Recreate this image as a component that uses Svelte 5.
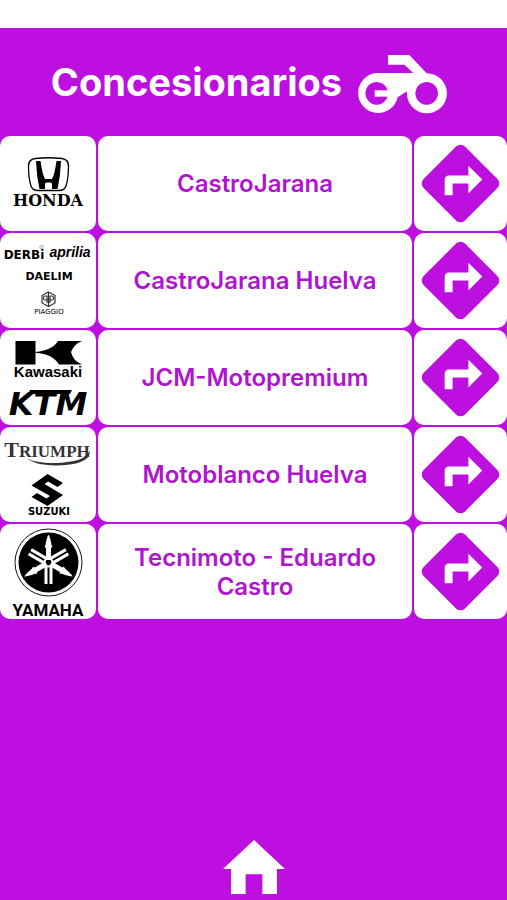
<script>
    let concesionarios = [
        {name: 'CastroJarana', logo: 'honda', brands: 'Honda'},
        {name: 'CastroJarana Huelva', logo: 'piaggio', brands: 'Derbi, Aprilia, Daelim, Piaggio'},
        {name: 'JCM-Motopremium', logo: 'kawasaki', brands: 'Kawasaki, KTM'},
        {name: 'Motoblanco Huelva', logo: 'triumph', brands: 'Triumph, Suzuki'},
        {name: 'Tecnimoto - Eduardo Castro', logo: 'yamaha', brands: 'Yamaha'}
    ];
</script>

<div class="page">
    <div class="status-bar"></div>

    <header>
        <h1>Concesionarios</h1>
        <svg class="bike" viewBox="50 40 276 183" aria-hidden="true">
            <path fill="#fff" fill-rule="evenodd" d="M146 43H210L262 98A60 60 0 1 1 203 152L175 170A60 60 0 1 1 112 97H222L195 72H146ZM112 124a34 34 0 1 0 .1 0ZM262 124a34 34 0 1 0 .1 0Z"/>
            <path fill="#fff" d="M106 149H156V168H106Z"/>
        </svg>
    </header>

    <main>
        {#each concesionarios as c}
            <div class="row">
                <div class="cell">
                    <svg class="logo" viewBox="0 0 96 95" role="img" aria-label={c.brands}>
                        {#if c.logo === 'honda'}
                            <path fill="none" stroke="#000" stroke-width="1.3" d="M35 22.500Q48 21 62 22.500Q68.500 23.500 68.500 30Q68.500 42 66 50Q64.500 54.500 59 54.500H38Q32.500 54.500 31 50Q28.500 42 28.500 30Q28.500 23.500 35 22.500Z"/>
                            <path d="M36 25H40.500Q42.500 39 45 43H52Q54.500 39 56.500 25H61Q60.500 40 57.500 53H52V48Q52 46.500 50 46.500H47Q45 46.500 45 48V53H39.500Q36.500 40 36 25Z"/>
                            <text class="serif" x="48" y="70" font-size="16">HONDA</text>
                        {:else if c.logo === 'piaggio'}
                            <text class="wide" x="24" y="26" font-size="12">DERBi</text>
                            <circle cx="41.500" cy="14" r="1.700" fill="none" stroke="#777" stroke-width=".6"/>
                            <text class="sans slant" x="70" y="24" font-size="14">aprilia</text>
                            <text class="wide" x="49" y="47" font-size="11">DAELIM</text>
                            <path fill="none" stroke="#333" stroke-width="1.200" d="M48.500 59L55 62.500V70L48.500 73.500L42 70V62.500ZM48.500 59V73.500M47 70V63H45Q43.500 63 43.500 65Q43.500 67 45 67H52Q53.500 67 53.500 65Q53.500 63 52 63H50V70"/>
                            <text class="wide light" x="49" y="81" font-size="7">PIAGGIO</text>
                        {:else if c.logo === 'kawasaki'}
                            <path d="M15.500 11H35.500V22Q53 20 58 11H82Q74 14 71 22Q73 31 82 34.500H59Q53 24 35.500 22.700V34.500H15.500Z"/>
                            <text class="sans" x="48" y="47" font-size="15">Kawasaki</text>
                            <path d="M30 60H72L70 64H28Z"/>
                            <text class="wide slant" x="48" y="85" font-size="32">KTM</text>
                        {:else if c.logo === 'triumph'}
                            <text class="roman" x="47" y="30" font-size="17"><tspan font-size="22">T</tspan>RIUMPH</text>
                            <path fill="#333" d="M27 31Q34 36 55 36Q83 35 87 27L90 24L89 29Q83 38 56 38.500Q34 38 27 31Z"/>
                            <path d="M47.500 47L63 56L57.500 60L48 54.500L44.500 57L63 68L47.500 79L31.500 70L37 66L46.500 71.500L50 69L31.500 58.500Z"/>
                            <text class="wide" x="49" y="88" font-size="10">SUZUKI</text>
                        {:else}
                            <circle cx="48.500" cy="38.500" r="33.500" fill="none" stroke="#111"/>
                            <circle cx="48.500" cy="38.500" r="30"/>
                            {#each [0, 120, 240] as angle}
                                <g transform="rotate({angle} 48.500 38.500)">
                                    <path fill="#fff" d="M48.500 10.500Q50.500 14 51.500 21L52.500 23L51 24V36H46V24L44.500 23L45.500 21Q46.500 14 48.500 10.500Z"/>
                                    <path fill="none" stroke="#fff" stroke-width="3" d="M46 42V60M51 42V60"/>
                                </g>
                            {/each}
                            <circle cx="48.500" cy="38.500" r="4" fill="none" stroke="#fff" stroke-width="2"/>
                            <text class="grotesk" x="48" y="92" font-size="17">YAMAHA</text>
                        {/if}
                    </svg>
                </div>
                <button class="cell name">{c.name}</button>
                <button class="cell" aria-label="Cómo llegar a {c.name}">
                    <svg class="directions" viewBox="1 1 22 22" aria-hidden="true">
                        <rect x="4.600" y="4.600" width="14.800" height="14.800" rx="1.600" transform="rotate(45 12 12)"/>
                        <path fill="#fff" d="M14 14.500V12h-4v3H8v-4c0-.55.45-1 1-1h5V7.500l3.500 3.500-3.500 3.500z"/>
                    </svg>
                </button>
            </div>
        {/each}
    </main>

    <footer>
        <a href="#inicio" aria-label="Inicio">
            <svg class="home" viewBox="2 3 20 17" preserveAspectRatio="none" aria-hidden="true">
                <path fill="#fff" d="M9.300 20v-6.200h5.400V20h4.700v-7.900H22L12 3 2 12.100h2.600V20z"/>
            </svg>
        </a>
    </footer>
</div>

<style>
    :global(body) {
        margin: 0;
    }
    .page {
        min-height: 100vh;
        display: flex;
        flex-direction: column;
        background: #bc0fe0;
        font-family: Inter, "Liberation Sans", sans-serif;
    }
    .status-bar {
        height: 28px;
        background: #fff;
    }
    header {
        display: flex;
        align-items: center;
        justify-content: center;
        gap: 14px;
        height: 108px;
        padding-right: 8px;
    }
    h1 {
        margin: 0;
        color: #fff;
        font-size: 38px;
        font-weight: 700;
        line-height: 48px;
    }
    .bike {
        width: 92px;
        height: 61px;
        margin-top: 4px;
    }
    main {
        display: flex;
        flex-direction: column;
        gap: 2px;
    }
    .row {
        display: grid;
        grid-template-columns: 96px 1fr 93px;
        gap: 2px;
        min-height: 95px;
    }
    .cell {
        display: flex;
        align-items: center;
        justify-content: center;
        padding: 0;
        border: 0;
        border-radius: 10px;
        background: #fff;
    }
    button {
        cursor: pointer;
    }
    .name {
        padding: 0 32px;
        color: #b014d0;
        font-family: inherit;
        font-size: 24px;
        font-weight: 600;
        line-height: 29px;
        text-align: center;
    }
    .logo {
        width: 96px;
        height: 95px;
    }
    .logo text {
        font-weight: 700;
        text-anchor: middle;
    }
    .logo .serif {
        font-family: "DejaVu Serif", serif;
    }
    .logo .roman {
        font-family: "Liberation Serif", serif;
        fill: #333;
    }
    .logo .sans {
        font-family: "Liberation Sans", sans-serif;
    }
    .logo .wide {
        font-family: "DejaVu Sans", sans-serif;
    }
    .logo .grotesk {
        font-family: Roboto, sans-serif;
    }
    .logo .slant {
        font-style: italic;
    }
    .logo .light {
        font-weight: 400;
    }
    .directions {
        width: 87px;
        height: 87px;
        fill: #bc0fe0;
    }
    footer {
        display: flex;
        justify-content: center;
        margin-top: auto;
        padding: 16px 0 6px;
    }
    footer a {
        display: flex;
    }
    .home {
        width: 62px;
        height: 54px;
    }
</style>
